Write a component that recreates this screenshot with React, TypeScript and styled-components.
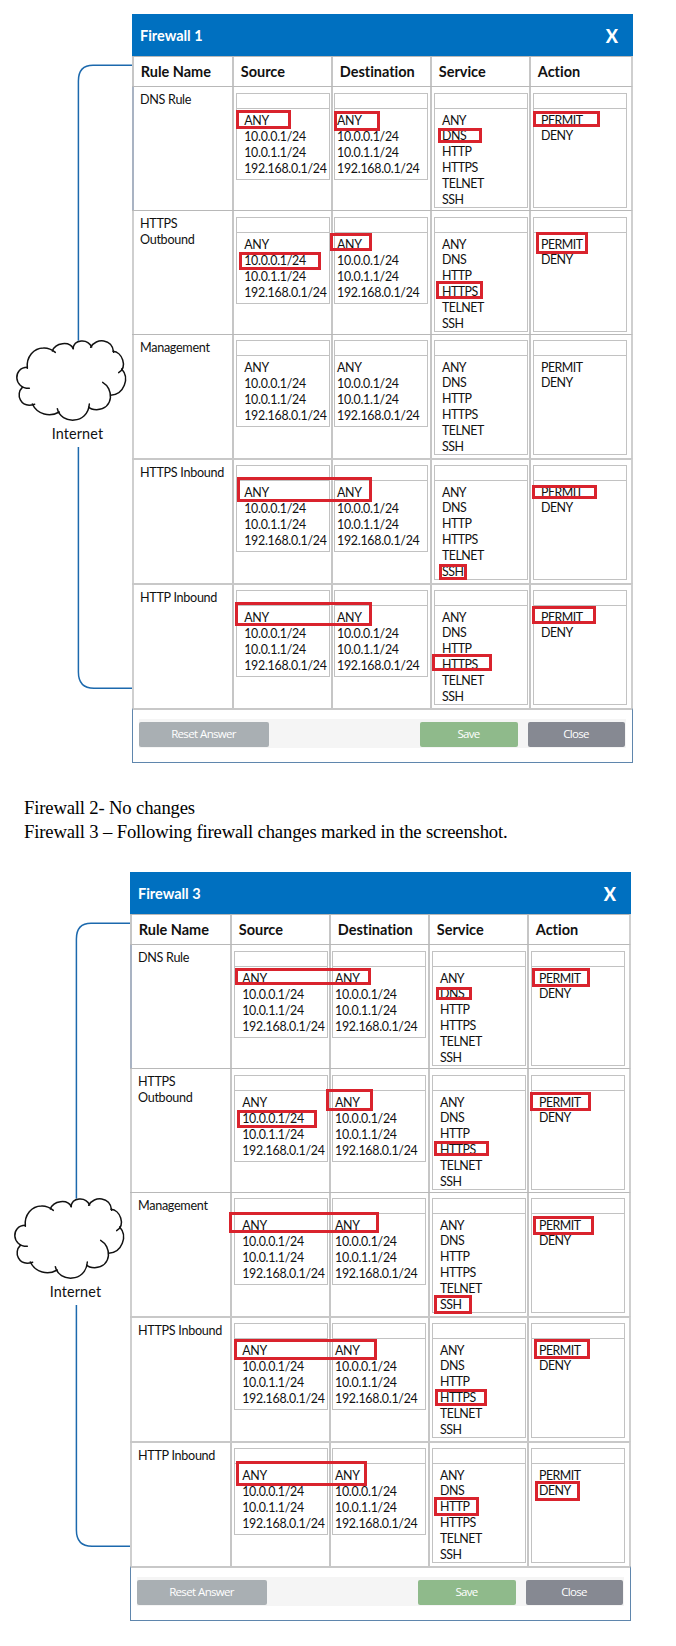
import React from "react";
import styled, { createGlobalStyle } from "styled-components";

const GlobalStyle = createGlobalStyle`
  * { box-sizing: border-box; }
  body { margin: 0; background: #fff; }
`;

const sans = `Lato, "Open Sans", sans-serif`;

const Page = styled.main`
  width: 676px;
  height: 1646px;
  padding-top: 14px;
  overflow: hidden;
  background: #fff;
  color: #111;
`;

const Figure = styled.section<{ $shift?: number }>`
  position: relative;
  display: flex;
  margin-left: ${(p) => p.$shift ?? 0}px;
  height: 749px;
  font-family: ${sans};
`;

const Network = styled.div`
  width: 132px;
  flex: none;
  display: flex;
  flex-direction: column;
  padding-top: 50px;
  svg { display: block; flex: none; }
`;

const CloudLabel = styled.div`
  height: 22px;
  padding-left: 23px;
  text-align: center;
  font-size: 14.4px;
  letter-spacing: 0.1px;
  line-height: 18px;
`;

const Panel = styled.div`
  width: 501px;
  flex: none;
  display: flex;
  flex-direction: column;
`;

const TitleBar = styled.header`
  height: 42px;
  display: flex;
  align-items: center;
  justify-content: space-between;
  padding: 0 15px 0 8px;
  background: #0070c0;
  color: #fff;
  font-weight: 700;
  font-size: 14.5px;
  letter-spacing: -0.02px;
`;

const CloseMark = styled.span`
  font-size: 18px;
  font-weight: 900;
  line-height: 20px;
  padding-top: 2px;
`;

const Row = styled.div<{ $height: number; $line?: number }>`
  height: ${(p) => p.$height}px;
  display: grid;
  grid-template-columns: 100px 99px 99px 99px 102px;
  border-top: ${(p) => p.$line ?? 1}px solid ${(p) => (p.$line === 2 ? "#c8c8c8" : "#b8b8b8")};
  border-right: 2px solid #cfcfcf;
`;

const HeadCell = styled.div`
  border-left: 2px solid #c6c6c6;
  padding-left: 6.8px;
  font-weight: 700;
  font-size: 14.5px;
  letter-spacing: -0.02px;
  line-height: 29px;
  white-space: nowrap;
`;

const NameCell = styled.div<{ $tinted?: boolean }>`
  border-left: 2px solid ${(p) => (p.$tinted ? "#a9b3c3" : "#cfcfcf")};
  padding: 4.5px 0 0 6px;
  font-size: 12.6px;
  letter-spacing: -0.3px;
  line-height: 16px;
`;

const Cell = styled.div<{ $pad: number; $lift: number }>`
  border-left: 2px solid #c6c6c6;
  padding: ${(p) => 6 - p.$lift}px 0 0 ${(p) => p.$pad}px;
`;

const Picker = styled.div`
  width: 94px;
  border: 1px solid #c2c2c2;
`;

const PickerValue = styled.div`
  height: 15px;
  border-bottom: 1px solid #c2c2c2;
`;

const Options = styled.ul<{ $height: number; $inset: number; $words: boolean }>`
  height: ${(p) => p.$height}px;
  margin: 0;
  padding: ${(p) => (p.$words ? 3.5 : 4)}px 0 0 ${(p) => p.$inset}px;
  list-style: none;
  font-size: 12.4px;
  letter-spacing: ${(p) => (p.$words ? -0.5 : -0.27)}px;
  line-height: 15.87px;
  white-space: nowrap;
`;

const Footer = styled.footer`
  height: 55px;
  padding: 9px 6px 0;
  border: 1px solid #5f86ad;
  border-top: 2px solid #c8c8c8;
`;

const ButtonStrip = styled.div`
  height: 29px;
  display: flex;
  align-items: center;
  padding: 0 1px 0 0;
  background: #f5f5f5;
`;

const Button = styled.button<{ $width: number; $color: string; $left?: string }>`
  width: ${(p) => p.$width}px;
  height: 25px;
  margin: 1px 0 0 ${(p) => p.$left ?? "0"};
  padding: 0 1px 1px 0;
  border: 0;
  border-radius: 2px;
  background: ${(p) => p.$color};
  color: #fff;
  font: 11.5px "Open Sans", sans-serif;
  letter-spacing: -0.7px;
  word-spacing: 0.5px;
`;

const Mark = styled.span<{ $box: number[] }>`
  position: absolute;
  left: ${(p) => p.$box[0]}px;
  top: ${(p) => p.$box[1]}px;
  width: ${(p) => p.$box[2]}px;
  height: ${(p) => p.$box[3]}px;
  border: 3px solid #d9232d;
`;

const Notes = styled.div`
  height: 109px;
  padding: 33px 0 0 24px;
  font-family: "Liberation Serif", serif;
  font-size: 18.67px;
  letter-spacing: -0.165px;
  line-height: 24px;
  white-space: nowrap;
  color: #000;
  p { margin: 0; }
`;

const hosts = ["ANY", "10.0.0.1/24", "10.0.1.1/24", "192.168.0.1/24"];
const services = ["ANY", "DNS", "HTTP", "HTTPS", "TELNET", "SSH"];
const actions = ["PERMIT", "DENY"];

const rules = [
  { name: "DNS Rule", height: 124, line: 1, lift: 0 },
  { name: "HTTPS Outbound", height: 124, line: 1, lift: 0 },
  { name: "Management", height: 124, line: 1, lift: 1 },
  { name: "HTTPS Inbound", height: 125, line: 2, lift: 1 },
  { name: "HTTP Inbound", height: 125, line: 2, lift: 1 },
];

type SelectProps = {
  items: string[];
  pad: number;
  inset: number;
  height: number;
  lift: number;
  words?: boolean;
};

function Select({ items, pad, inset, height, lift, words = false }: SelectProps) {
  return (
    <Cell $pad={pad} $lift={lift}>
      <Picker>
        <PickerValue />
        <Options $height={height} $inset={inset} $words={words}>
          {items.map((item) => (
            <li key={item}>{item}</li>
          ))}
        </Options>
      </Picker>
    </Cell>
  );
}

const wire = { fill: "none", stroke: "#1c69ad", strokeWidth: 1.5 };

function InternetLink() {
  return (
    <Network>
      <svg width="132" height="266" viewBox="0 0 132 266">
        <path d="M132 1.3H93Q78.4 1.3 78.4 17V266" {...wire} />
      </svg>
      <svg width="132" height="95" viewBox="0 0 396 285">
        <path d="M235.2 0V32" {...wire} strokeWidth={4.5} />
        <g fill="none" stroke="#111" strokeWidth="4.5" strokeLinecap="round">
          <path d="M82 115C78 80 102 54 130 54C146 53 156 59 166 67" />
          <path d="M157 63C166 38 208 32 220 56" />
          <path d="M219 56C222 28 262 24 275 51" />
          <path d="M272 52C288 22 338 26 341 67" />
          <path d="M339 64C366 66 384 110 356 128" />
          <path d="M365 117C390 144 372 194 332 196" />
          <path d="M308 157C340 175 344 235 290 239C278 239 270 236 266 231" />
          <path d="M268 222C264 284 182 284 172 236" />
          <path d="M178 246C150 262 112 254 97 222" />
          <path d="M104 223C60 236 46 192 67 172" />
          <path d="M88 175C40 176 38 112 82 112" />
        </g>
      </svg>
      <CloudLabel>Internet</CloudLabel>
      <svg width="132" height="243" viewBox="0 0 132 243">
        <path d="M78.4 0V225Q78.4 241.3 94 241.3H132" {...wire} />
      </svg>
    </Network>
  );
}

type FirewallProps = { title: string; marks: number[][]; shift?: number };

function Firewall({ title, marks, shift }: FirewallProps) {
  return (
    <Figure $shift={shift}>
      <InternetLink />
      <Panel>
        <TitleBar>
          <span>{title}</span>
          <CloseMark>X</CloseMark>
        </TitleBar>
        <Row $height={30}>
          {["Rule Name", "Source", "Destination", "Service", "Action"].map((h) => (
            <HeadCell key={h}>{h}</HeadCell>
          ))}
        </Row>
        {rules.map(({ name, height, line, lift }, i) => (
          <Row key={name} $height={height} $line={line}>
            <NameCell $tinted={i === 0}>{name}</NameCell>
            <Select items={hosts} pad={2} inset={7.2} height={70} lift={lift} />
            <Select items={hosts} pad={1} inset={2} height={70} lift={lift} />
            <Select items={services} pad={2} inset={7} height={98} lift={lift} words />
            <Select items={actions} pad={2} inset={7} height={98} lift={lift} words />
          </Row>
        ))}
        <Footer>
          <ButtonStrip>
            <Button $width={130} $color="#a9afb3">Reset Answer</Button>
            <Button $width={98} $color="#8fba8b" $left="auto">Save</Button>
            <Button $width={97} $color="#868992" $left="10px">Close</Button>
          </ButtonStrip>
        </Footer>
      </Panel>
      {marks.map((box) => (
        <Mark key={box.join()} $box={box} />
      ))}
    </Figure>
  );
}

// Each highlight is [left, top, width, height] inside its figure.
const firstMarks = [
  [236, 96, 55, 19],
  [334, 97, 46, 20],
  [438, 114, 44, 15],
  [533, 97, 67, 16],
  [239, 238, 82, 18],
  [330, 219, 42, 18],
  [436, 267, 47, 18],
  [536, 218, 52, 22],
  [237, 463, 135, 25],
  [439, 550, 28, 16],
  [532, 471, 65, 14],
  [235, 588, 137, 24],
  [432, 640, 60, 17],
  [532, 592, 64, 18],
];

const thirdMarks = [
  [237, 96, 136, 17],
  [438, 115, 36, 13],
  [534, 96, 58, 19],
  [239, 238, 80, 18],
  [328, 217, 47, 22],
  [436, 269, 55, 15],
  [532, 220, 61, 19],
  [231, 340, 150, 21],
  [436, 423, 38, 19],
  [535, 344, 61, 19],
  [236, 467, 143, 21],
  [536, 467, 56, 20],
  [437, 517, 52, 17],
  [238, 589, 131, 25],
  [537, 609, 45, 20],
  [436, 625, 45, 19],
];

export default function App() {
  return (
    <Page>
      <GlobalStyle />
      <Firewall title="Firewall 1" marks={firstMarks} />
      <Notes>
        <p>Firewall 2- No changes</p>
        <p>Firewall 3 – Following firewall changes marked in the screenshot.</p>
      </Notes>
      <Firewall title="Firewall 3" marks={thirdMarks} shift={-2} />
    </Page>
  );
}
